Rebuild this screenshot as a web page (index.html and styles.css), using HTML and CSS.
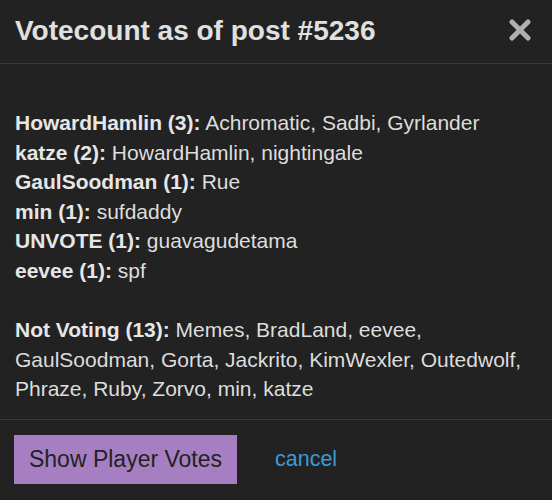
FILE: index.html
```html
<!DOCTYPE html>
<html lang="en">
<head>
  <meta charset="UTF-8">
  <meta name="viewport" content="width=device-width, initial-scale=1.0">
  <title>Votecount</title>
  <link rel="stylesheet" href="styles.css">
</head>
<body>
  <div class="modal">
    <header class="modal-header">
      <h1>Votecount as of post #5236</h1>
      <button class="close-btn" aria-label="Close">
        <svg width="22" height="22" viewBox="0 0 22 22">
          <path d="M3 3 L19 19 M19 3 L3 19" stroke="#b0b0b0" stroke-width="5" stroke-linecap="round"/>
        </svg>
      </button>
    </header>

    <section class="modal-body">
      <div class="votes">
        <div><b>HowardHamlin (3):</b> Achromatic, Sadbi, Gyrlander</div>
        <div><b>katze (2):</b> HowardHamlin, nightingale</div>
        <div><b>GaulSoodman (1):</b> Rue</div>
        <div><b>min (1):</b> sufdaddy</div>
        <div><b>UNVOTE (1):</b> guavagudetama</div>
        <div><b>eevee (1):</b> spf</div>
      </div>
      <p class="not-voting"><b>Not Voting (13):</b> Memes, BradLand, eevee, GaulSoodman, Gorta, Jackrito, KimWexler, Outedwolf, Phraze, Ruby, Zorvo, min, katze</p>
    </section>

    <footer class="modal-footer">
      <button class="primary-btn">Show Player Votes</button>
      <a href="#" class="cancel-link">cancel</a>
    </footer>
  </div>
</body>
</html>
```

FILE: styles.css
```css
body {
  margin: 0;
  padding: 0;
  background-color: #222222;
  color: #dddddd;
  font-family: "Liberation Sans", Arial, sans-serif;
}

.modal {
  width: 552px;
  height: 500px;
  display: flex;
  flex-direction: column;
}

.modal-header {
  display: flex;
  align-items: center;
  justify-content: space-between;
  height: 64px;
  padding: 0 21px 0 15px;
  border-bottom: 1px solid #3a3a3a;
  box-sizing: border-box;
}

.modal-header h1 {
  margin: 0;
  font-size: 28px;
  font-weight: bold;
  color: #e0e0e0;
  padding-bottom: 2px;
}

.close-btn {
  background: none;
  border: none;
  padding: 0;
  cursor: pointer;
  display: flex;
  margin-bottom: 3px;
}

.modal-body {
  padding: 44px 15px 15px;
  font-size: 21px;
  line-height: 29.6px;
  border-bottom: 1px solid #3a3a3a;
}

.votes b,
.not-voting b {
  color: #e6e6e6;
}

.not-voting {
  margin: 29.6px 0 0;
}

.modal-footer {
  display: flex;
  align-items: center;
  gap: 38px;
  padding: 15px 14px 0;
}

.primary-btn {
  background-color: #a67fc2;
  color: #222222;
  border: none;
  font-family: "Liberation Sans", Arial, sans-serif;
  font-size: 23px;
  height: 49px;
  width: 223px;
  padding: 0;
  cursor: pointer;
}

.cancel-link {
  color: #3a9ad6;
  font-size: 21.5px;
  text-decoration: none;
}
```
